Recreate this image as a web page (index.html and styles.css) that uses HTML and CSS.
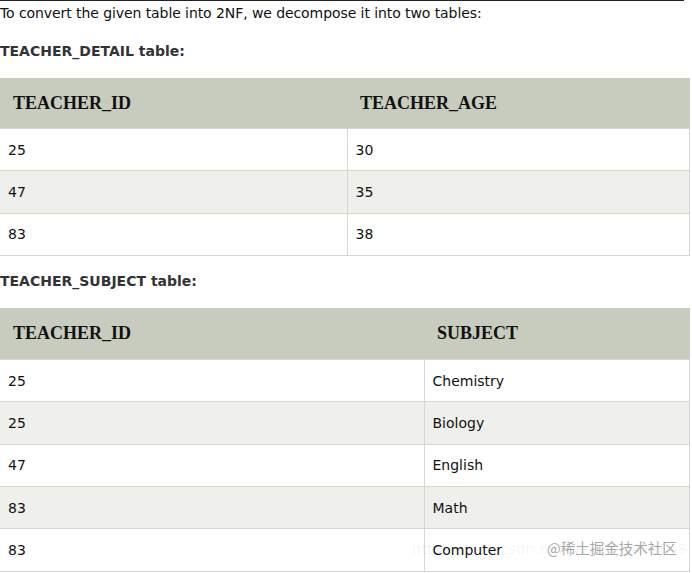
FILE: index.html
```html
<!DOCTYPE html>
<html>
<head>
<meta charset="utf-8">
<link rel="stylesheet" href="styles.css">
</head>
<body>
<div class="page">
  <div class="topline"></div>
  <p class="intro">To convert the given table into 2NF, we decompose it into two tables:</p>
  <p class="caption">TEACHER_DETAIL table:</p>
  <table class="tbl t1">
    <colgroup><col class="c1a"><col></colgroup>
    <tr class="head"><th>TEACHER_ID</th><th>TEACHER_AGE</th></tr>
    <tr><td>25</td><td>30</td></tr>
    <tr class="alt"><td>47</td><td>35</td></tr>
    <tr><td>83</td><td>38</td></tr>
  </table>
  <p class="caption cap2">TEACHER_SUBJECT table:</p>
  <table class="tbl t2">
    <colgroup><col class="c2a"><col></colgroup>
    <tr class="head"><th>TEACHER_ID</th><th>SUBJECT</th></tr>
    <tr><td>25</td><td>Chemistry</td></tr>
    <tr class="alt"><td>25</td><td>Biology</td></tr>
    <tr><td>47</td><td>English</td></tr>
    <tr class="alt"><td>83</td><td>Math</td></tr>
    <tr><td>83</td><td>Computer</td></tr>
  </table>
  <div class="wm-url">https://blog.csdn.net/weixin_4482548</div>
  <div class="wm">@稀土掘金技术社区</div>
</div>
</body>
</html>
```

FILE: styles.css
```css
html, body {
  margin: 0;
  padding: 0;
  background: #fff;
}
.page {
  position: relative;
  width: 692px;
  height: 573px;
  overflow: hidden;
  font-family: "DejaVu Sans", Verdana, sans-serif;
  color: #111;
}
.topline {
  height: 1px;
  width: 684px;
  background: #222;
}
.intro {
  margin: 4px 0 0 0;
  font-size: 14px;
  line-height: 17px;
  letter-spacing: -0.08px;
}
.caption {
  margin: 21px 0 0 0;
  font-size: 14px;
  line-height: 17px;
  font-weight: bold;
  color: #333;
}
.cap2 { margin-top: 17px; }
.tbl {
  border-collapse: collapse;
  width: 690px;
  table-layout: fixed;
  font-size: 14px;
}
.t1 { margin-top: 18px; }
.t2 { margin-top: 18px; }
.c1a { width: 347px; }
.c2a { width: 424px; }
.tbl th {
  background: #c8ccbe;
  font-family: "Liberation Serif", "Times New Roman", serif;
  font-size: 18px;
  font-weight: bold;
  color: #111;
  text-align: left;
  height: 50px;
  padding: 0 0 0 13px;
  border: none;
  border-bottom: 1px solid #d8d8d2;
}
.t2 th { height: 51px; }
.tbl td {
  height: 41.35px;
  padding: 0 0 0 8px;
  border: 1px solid #d7d7d4;
  border-top: none;
  border-left: none;
  color: #111;
}
.tbl tr.alt td { background: #efefec; }
.wm-url {
  position: absolute;
  left: 412px;
  top: 541px;
  font-size: 14px;
  letter-spacing: 0.3px;
  color: rgba(0,0,0,0.06);
  font-family: "DejaVu Sans", sans-serif;
  white-space: nowrap;
}
.wm {
  position: absolute;
  left: 547px;
  top: 538px;
  font-size: 14.5px;
  line-height: 20px;
  color: rgba(90,90,90,0.55);
  font-family: "Noto Sans CJK SC", sans-serif;
  white-space: nowrap;
}
```
